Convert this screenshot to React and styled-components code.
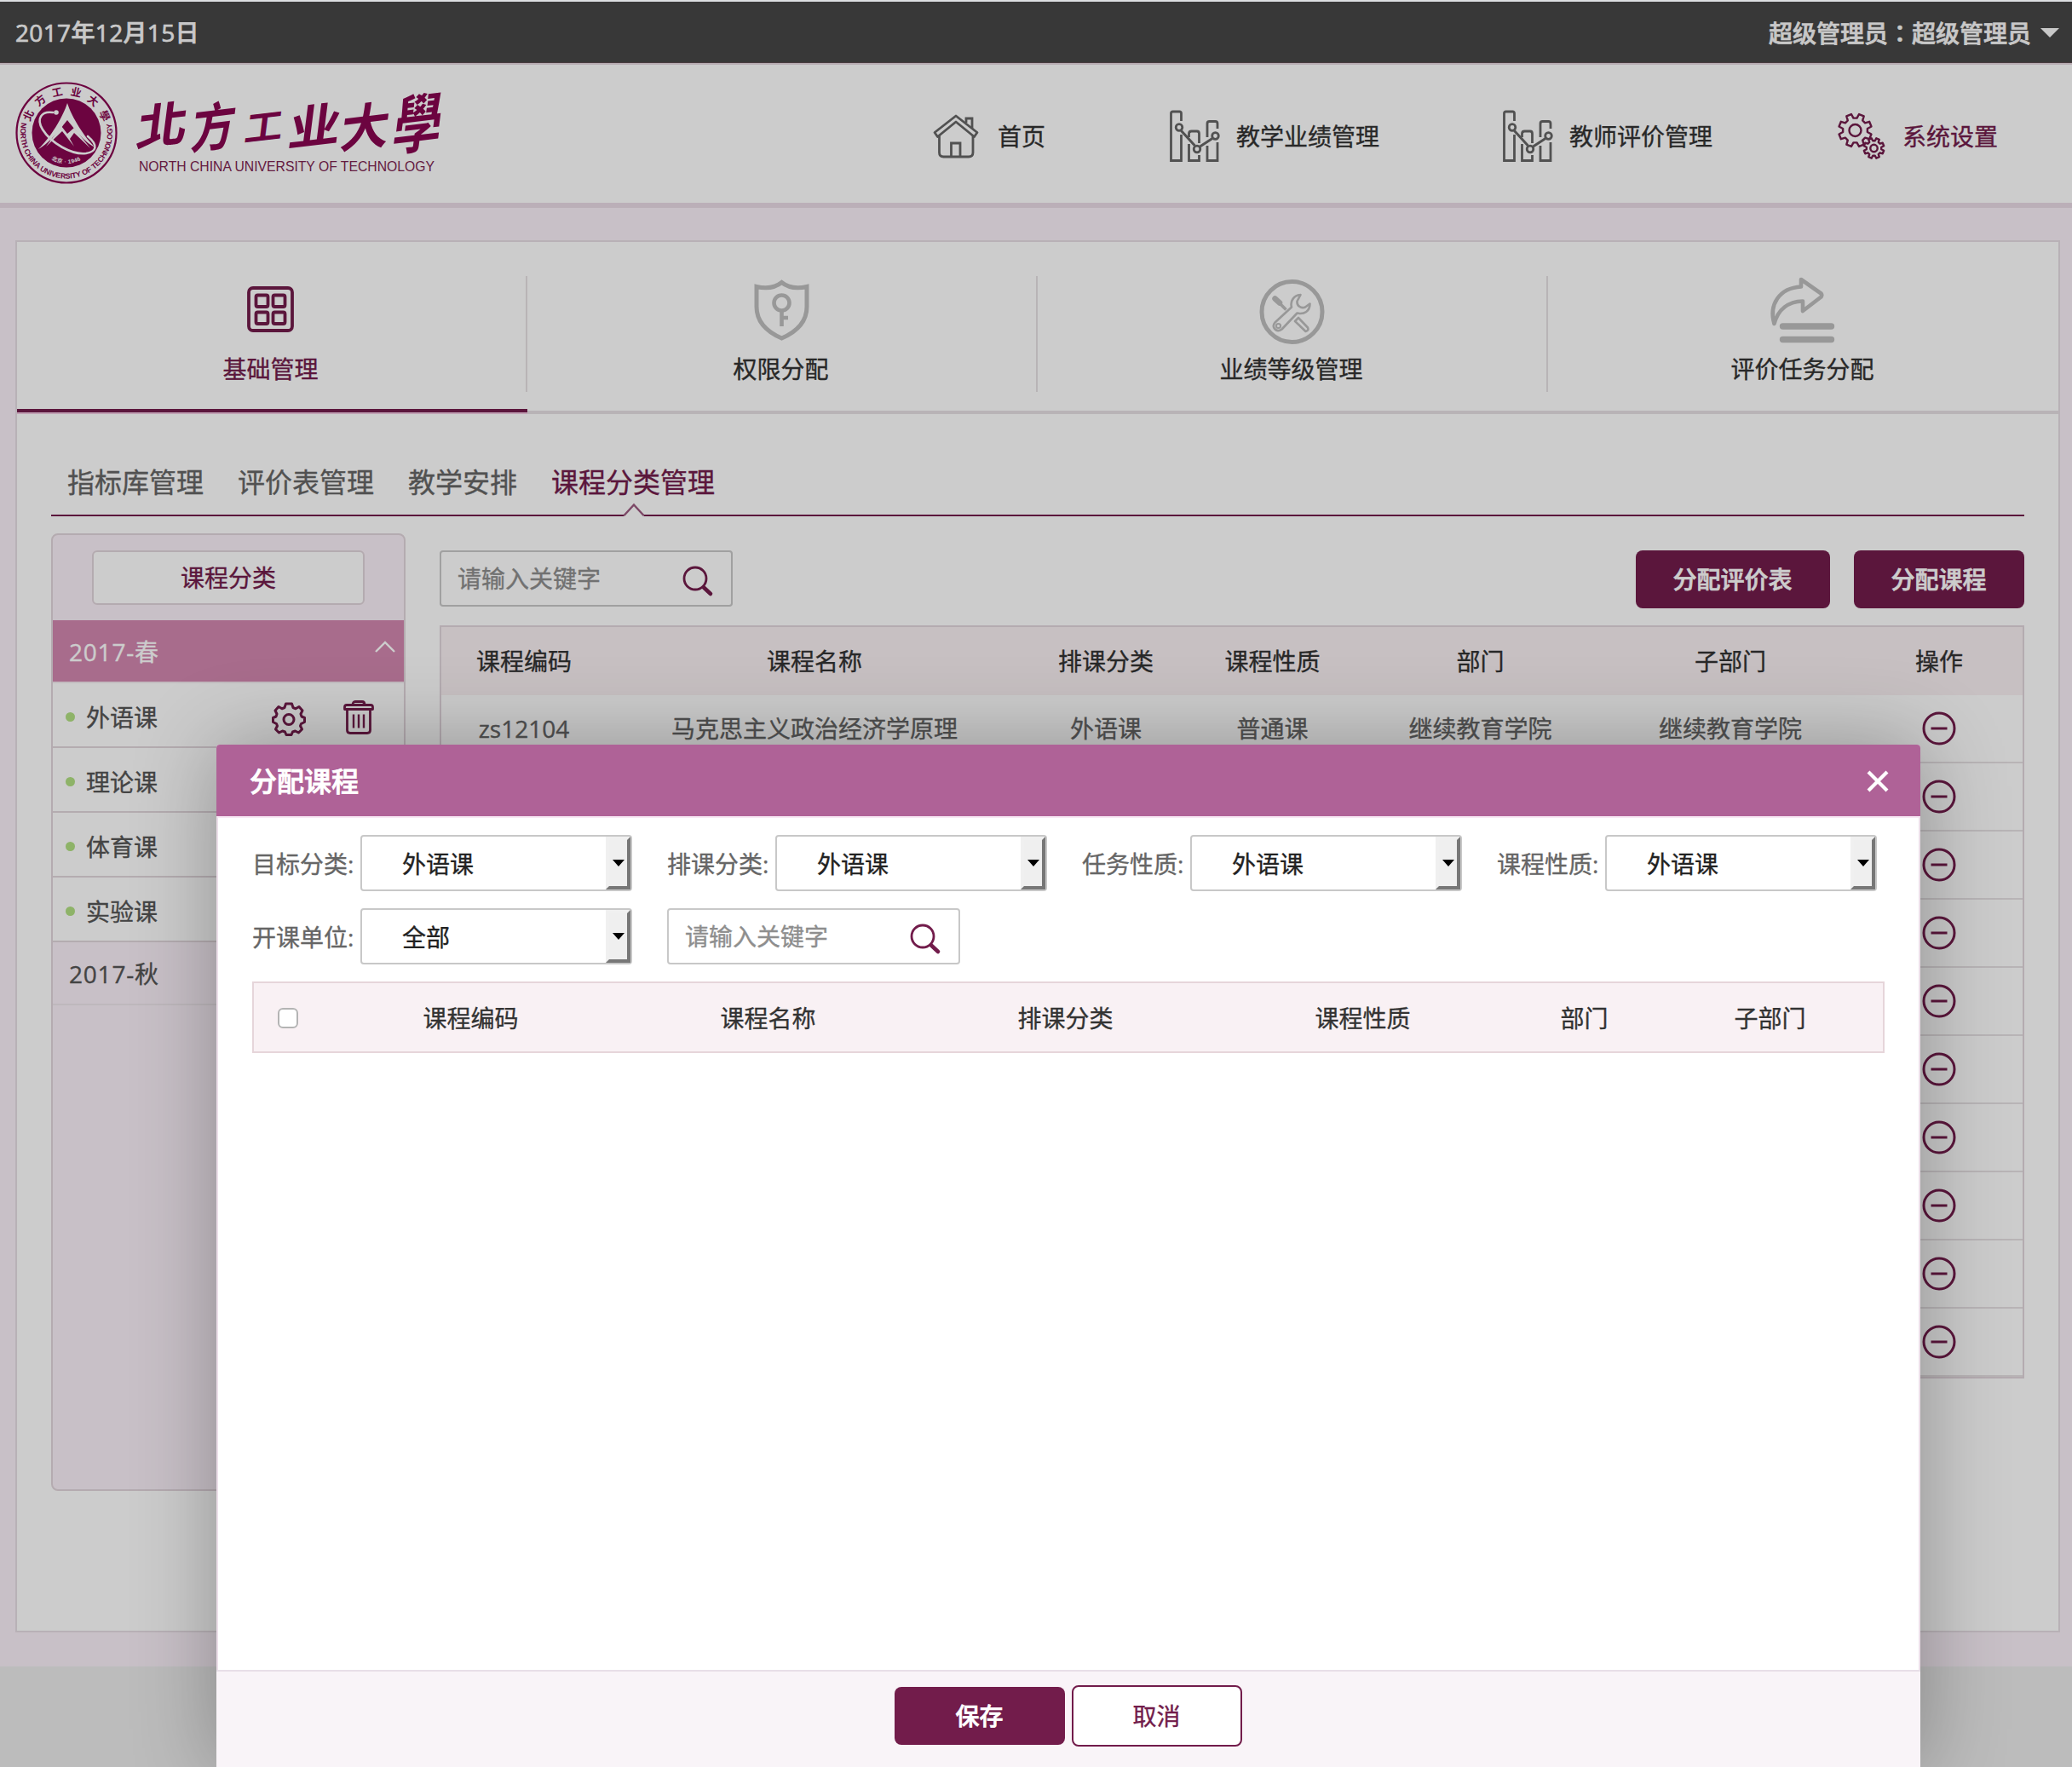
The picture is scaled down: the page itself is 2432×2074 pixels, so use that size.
import React from "react";
import styled, { createGlobalStyle, css } from "styled-components";

const MAROON = "#721c4b";
const SANS = `"Open Sans", "Noto Sans CJK SC", sans-serif`;

const GlobalStyle = createGlobalStyle`
  * { box-sizing: border-box; }
  html, body { margin: 0; padding: 0; }
  body {
    height: 2074px;
    overflow: hidden;
    background: #ebebeb;
    color: #333;
    font: 28px/40px ${SANS};
    -webkit-text-stroke: 0.35px currentColor;
  }
  svg { display: block; flex: none; overflow: visible; }
  svg text { -webkit-text-stroke: 0; }
`;

const Page = styled.div`
  position: relative;
  width: 2432px;
  height: 2074px;
  overflow: hidden;
`;

/* ---------- top bar ---------- */

const TopLine = styled.div`
  position: relative;
  z-index: 3;
  height: 2px;
  background: #dcdee1;
`;

const TopBar = styled.div`
  display: flex;
  align-items: center;
  justify-content: space-between;
  height: 72px;
  padding: 1px 15px 0 18px;
  border-bottom: 1px solid #5a4c50;
  background: #464646;
  color: #fafafa;
  font-weight: 500;
  -webkit-text-stroke-width: 0.7px;
`;

const Today = styled.span`
  letter-spacing: 0.35px;
`;

const UserMenu = styled.div`
  display: flex;
  align-items: center;
  gap: 11px;
  font-family: "Noto Sans CJK SC", sans-serif;
`;

const WideColon = styled.span`
  font-family: "Noto Sans CJK TC", sans-serif;
`;

const CaretDown = styled.i`
  border: solid transparent;
  border-width: 11px 11px 0;
  border-top-color: #fafafa;
`;

/* ---------- header ---------- */

const Header = styled.header`
  display: flex;
  align-items: stretch;
  justify-content: space-between;
  height: 170px;
  padding: 0 87px 0 18px;
  border-top: 2px solid #e6d9e0;
  border-bottom: 6px solid #eadbe6;
  background: #fff;
`;

const Brand = styled.div`
  display: flex;
  gap: 22px;
  padding-top: 20px;
`;

const Nav = styled.nav`
  display: flex;
  align-items: center;
  padding-top: 5px;
`;

const NavItem = styled.a`
  display: flex;
  align-items: center;
  gap: ${(p) => p.$gap}px;
  margin-left: ${(p) => p.$before || 0}px;
  color: ${(p) => (p.$active ? MAROON : "#333")};
`;

/* ---------- card with big tabs ---------- */

const Main = styled.main`
  height: 1712px;
  padding: 38px 14px 40px 18px;
  background: #fbf1f9;
`;

const Card = styled.section`
  height: 1634px;
  border: 2px solid #e6dee4;
  background: #fff;
`;

const Tabs = styled.div`
  display: grid;
  grid-template-columns: repeat(4, 599px);
  height: 202px;
`;

const Tab = styled.div`
  display: flex;
  flex-direction: column;
  padding-top: 40px;
  border-bottom: 4px solid #e6e0e4;
  color: ${(p) => (p.$active ? MAROON : "#333")};
  ${(p) =>
    p.$active &&
    css`
      border-bottom-color: ${MAROON};
      height: 200px;
      box-shadow: 0 2px 0 #f0c8e0;
    `}
`;

const TabInner = styled.div`
  display: flex;
  flex-direction: column;
  align-items: center;
  gap: 5px;
  height: 136px;
  padding-right: 2px;
  border-right: ${(p) => (p.$last ? "0" : "2px")} solid #e6e2e4;
`;

/* ---------- sub navigation ---------- */

const SubNav = styled.div`
  display: flex;
  gap: 40px;
  width: 2316px;
  height: 100px;
  margin: 20px 0 20px 40px;
  padding: 37px 20px 0 19px;
  border-bottom: 2px solid ${MAROON};
  font-size: 32px;
  line-height: 46px;
`;

const SubItem = styled.a`
  position: relative;
  height: 61px;
  color: ${(p) => (p.$active ? MAROON : "#666")};
`;

const SubCaret = styled.svg`
  position: absolute;
  left: 50%;
  bottom: -2px;
  margin-left: -12px;
`;

/* ---------- workspace ---------- */

const Workspace = styled.div`
  display: flex;
  align-items: flex-start;
  gap: 40px;
  padding-left: 40px;
`;

const Sidebar = styled.aside`
  width: 416px;
  height: 1124px;
  border: 2px solid #e2d6dc;
  border-radius: 8px;
  background: #fbf1f9;
`;

const SideHead = styled.div`
  display: flex;
  justify-content: center;
  height: 100px;
  padding-top: 18px;
`;

const SideButton = styled.button`
  width: 320px;
  height: 64px;
  padding: 0;
  border: 2px solid #e2d6dc;
  border-radius: 6px;
  background: #fff;
  color: ${MAROON};
  font: 28px/40px ${SANS};
  -webkit-text-stroke: inherit;
`;

const Term = styled.div`
  display: flex;
  align-items: center;
  justify-content: space-between;
  height: 74px;
  padding: 1px 10px 0 19px;
  border-bottom: 2px solid #eee6ec;
  color: #555;
  letter-spacing: 0.8px;
  ${(p) =>
    p.$open &&
    css`
      border-bottom-color: #f3eaef;
      background: #d387af;
      background-clip: padding-box;
      color: #fff;
    `}
`;

const TermCaret = styled.span`
  display: flex;
  padding-bottom: 12px;
`;

const Category = styled.div`
  display: flex;
  align-items: center;
  height: 76px;
  padding: 5px 34px 0 15px;
  border-bottom: 2px solid #e2d8dc;
  background: #fff;
  color: #555;
`;

const Dot = styled.i`
  width: 11px;
  height: 11px;
  margin-right: 13px;
  border-radius: 50%;
  background: #b2e082;
`;

const CategoryTools = styled.span`
  display: flex;
  align-items: center;
  gap: 43px;
  margin-left: auto;

  > :first-child {
    margin-top: 5px;
  }
`;

const Content = styled.div`
  display: flex;
  flex-direction: column;
  width: 1860px;
  padding-top: 20px;
`;

const Toolbar = styled.div`
  display: flex;
  gap: 28px;
  height: 88px;
`;

const SearchBox = styled.label`
  display: flex;
  align-items: center;
  justify-content: space-between;
  width: 344px;
  height: 66px;
  padding: 0 21px 0 19px;
  border: 2px solid #c8c8c8;
  border-radius: 4px;
  background: #fff;
  color: #8e8e8e;

  svg {
    margin-top: 5px;
  }
`;

const Spacer = styled.span`
  flex: 1;
`;

const Button = styled.button`
  width: ${(p) => p.$w || 200}px;
  height: ${(p) => (p.$ghost ? 72 : 68)}px;
  padding: 0 1px 0 0;
  border: ${(p) => (p.$ghost ? `2px solid ${MAROON}` : "0")};
  border-radius: 8px;
  background: ${(p) => (p.$ghost ? "#fff" : MAROON)};
  color: ${(p) => (p.$ghost ? MAROON : "#fff")};
  font: ${(p) => (p.$ghost ? 400 : 500)} 28px/40px ${SANS};
  -webkit-text-stroke: ${(p) => (p.$ghost ? 0.35 : 0.7)}px currentColor;
`;

const Table = styled.div`
  height: 884px;
  border: 2px solid #e2d6dc;
`;

const Row = styled.div`
  display: grid;
  grid-template-columns: 194px 488px 196px 195px 293px 294px 196px;
  align-items: center;
  justify-items: center;
  height: 80px;
  border-bottom: 2px solid #e6e2e4;
  color: #666;
  ${(p) =>
    p.$head &&
    css`
      border-bottom: 0;
      background: #f9f0f3;
      color: #333;
    `}
`;

const OpCell = styled.span`
  grid-column: 7;
`;

/* ---------- dialog ---------- */

const Shade = styled.div`
  position: absolute;
  inset: 0;
  z-index: 1;
  background: rgba(0, 0, 0, 0.2);
`;

const Dialog = styled.section`
  position: absolute;
  z-index: 2;
  left: 254px;
  top: 874px;
  display: flex;
  flex-direction: column;
  width: 2000px;
  height: 1200px;
  border-radius: 4px 4px 0 0;
  background: #fff;
  box-shadow: 2px 2px 100px rgba(0, 0, 0, 0.3);
`;

const DialogHead = styled.header`
  display: flex;
  align-items: center;
  justify-content: space-between;
  height: 84px;
  padding: 2px 37px 0 39px;
  border-radius: 4px 4px 0 0;
  background: #af6297;
  color: #fff;
  font-size: 32px;
  font-weight: 500;
  -webkit-text-stroke-width: 0.8px;
`;

const DialogBody = styled.div`
  height: 1002px;
  padding: 20px 40px 0;
  border: 2px solid #ecdfe9;
  border-top-color: #f8e8f4;
  border-bottom: 0;
`;

const Filters = styled.div`
  display: grid;
  grid-template-columns: repeat(4, 446px);
  gap: 20px 41px;
  margin-bottom: 20px;
`;

const Field = styled.label`
  display: flex;
  align-items: center;
  justify-content: space-between;
  color: #666;
`;

const Caption = styled.span`
  padding-top: 1px;
`;

const Select = styled.span`
  display: flex;
  align-items: center;
  justify-content: space-between;
  width: 319px;
  height: 66px;
  padding-left: 47px;
  border: 2px solid #c8c8c8;
  border-radius: 4px;
  color: #222;
`;

const SelectButton = styled.span`
  display: flex;
  align-items: center;
  justify-content: center;
  width: 29px;
  height: 62px;
  border: solid;
  border-width: 4px;
  border-color: #f0f0f0 #777 #777 #f0f0f0;
  background: #efefef;

  &::after {
    content: "";
    border: solid transparent;
    border-width: 8px 7px 0;
    border-top-color: #000;
  }
`;

const PickHead = styled.div`
  display: grid;
  grid-template-columns: 80px repeat(4, 349px) 171px 265px;
  align-items: center;
  justify-items: center;
  width: 1916px;
  height: 84px;
  padding-top: 1px;
  border: 2px solid #e6d5da;
  background: #f9f1f4;
  color: #333;
`;

const Checkbox = styled.i`
  width: 24px;
  height: 24px;
  border: 2px solid #b4b4b4;
  border-radius: 6px;
  background: #fff;
`;

const DialogFoot = styled.footer`
  display: flex;
  align-items: center;
  justify-content: center;
  gap: 8px;
  height: 114px;
  padding-bottom: 8px;
  border-top: 2px solid #e8dfe8;
  background: #f9f4f8;
`;

/* ---------- drawings ---------- */

function gearPath(cx, cy, outer, inner, teeth) {
  const step = (Math.PI * 2) / teeth;
  const pts = [];
  for (let i = 0; i < teeth; i += 1) {
    const a = i * step - Math.PI / 2 + step / 2;
    [
      [inner, -0.32],
      [outer, -0.2],
      [outer, 0.2],
      [inner, 0.32],
    ].forEach(([r, k]) => {
      const t = a + k * step;
      pts.push(`${(cx + r * Math.cos(t)).toFixed(2)} ${(cy + r * Math.sin(t)).toFixed(2)}`);
    });
  }
  return `M${pts.join("L")}Z`;
}

const Seal = () => (
  <svg width="120" height="120" viewBox="0 0 120 120" fill="none">
    <defs>
      <path id="ring-cn" d="M15.500 60A44.500 44.500 0 0 1 104.500 60" />
      <path id="ring-en" d="M7.500 47A54 54 0 1 0 112.500 47" />
      <path id="ring-in" d="M24 60A36 36 0 0 0 96 60" />
    </defs>
    <circle cx="60" cy="60" r="58.500" stroke="#880550" strokeWidth="2.200" />
    <circle cx="60" cy="60" r="40.500" fill="#880550" />
    <path
      d="M61 25C66 41 82 67 94 77C80 71 67 52 61 45C55 52 42 71 27 79C41 66 56 41 61 25Z"
      fill="#fff"
    />
    <path d="M36 76L54 52L61 61L69 54L88 78L69 60L64 67L69 76L55 58Z" fill="#fff" />
    <path
      d="M44 36C31 34 24 43 32 56C42 72 66 86 83 84C95 82 98 75 85 64"
      stroke="#fff"
      strokeWidth="2.600"
      strokeLinecap="round"
    />
    <circle cx="48" cy="36" r="2.800" fill="#fff" />
    <text fill="#880550" fontSize="12.500" fontWeight="700" fontFamily="Noto Sans CJK TC, sans-serif">
      <textPath href="#ring-cn" startOffset="13" textLength="114">
        北方工业大學
      </textPath>
    </text>
    <text fill="#880550" fontSize="8.800" fontWeight="700" fontFamily="Liberation Sans, sans-serif">
      <textPath href="#ring-en" startOffset="1" textLength="192">
        NORTH CHINA UNIVERSITY OF TECHNOLOGY
      </textPath>
    </text>
    <text fill="#fff" fontSize="6.500" fontWeight="700" fontFamily="Liberation Sans, Noto Sans CJK SC, sans-serif">
      <textPath href="#ring-in" startOffset="38" textLength="36">
        北京 · 1946
      </textPath>
    </text>
  </svg>
);

const TITLE = [
  ["北", 31, 50, 58, 58],
  ["方", 91, 52, 50, 62],
  ["工", 150, 52, 44, 42],
  ["业", 210, 51, 60, 56],
  ["大", 269, 52, 56, 60],
  ["學", 331, 48, 56, 76],
];

const Wordmark = () => (
  <svg width="370" height="124" viewBox="0 0 370 124">
    <g fill="#880550" fontFamily="Noto Sans CJK TC, sans-serif" fontWeight="700" textAnchor="middle">
      {TITLE.map(([ch, x, y, w, h]) => (
        <text key={ch} fontSize="60" transform={`translate(${x} ${y}) skewX(-14) rotate(-7) scale(${w / 60} ${h / 60})`} y="23">
          {ch}
        </text>
      ))}
    </g>
    <text x="3" y="105" fontSize="17" fill="#7d2451" fontFamily="Liberation Sans, sans-serif" textLength="347" lengthAdjust="spacingAndGlyphs">
      NORTH CHINA UNIVERSITY OF TECHNOLOGY
    </text>
  </svg>
);

const HomeIcon = () => (
  <svg width="56" height="56" viewBox="0 0 56 56" fill="none" stroke="#666" strokeWidth="2.800">
    <path d="M28 4L3 23.500L6.500 28.500L28 11L49.500 28.500L53 23.500Z" strokeLinejoin="round" />
    <path d="M40 12V7H47V18.500M8.500 27V47Q8.500 52 13.500 52H43Q48 52 48 47V27M22.500 52V36H33V52" />
  </svg>
);

const ChartIcon = () => (
  <svg width="62" height="64" viewBox="0 0 62 64" fill="none" stroke="#666" strokeWidth="2.800">
    <path d="M14.500 14V5Q14.500 3 12.500 3H4.500Q2.500 3 2.500 5V60.500H14.500V30" />
    <path d="M23.500 33V29Q23.500 26 26.500 26H33Q35.500 26 35.500 29V40M23.500 41V60.500H35.500V54" />
    <path d="M45 33V17Q45 14.500 47.500 14.500H54.500Q57 14.500 57 17V23M45 43V60.500H57V39" />
    <path d="M14.500 25.500L30.500 43M36.500 44L51 34.500" strokeWidth="3" />
    <circle cx="12" cy="21.500" r="3.800" />
    <circle cx="33" cy="47" r="3.800" />
    <circle cx="54.500" cy="31.500" r="3.800" />
  </svg>
);

const GearsIcon = () => (
  <svg width="58" height="58" viewBox="0 0 58 58" fill="none" stroke={MAROON} strokeWidth="2.400" strokeLinejoin="round">
    <path d={gearPath(21.5, 22, 19.5, 14.5, 8)} />
    <circle cx="21.500" cy="22" r="7" />
    <path d={gearPath(43.5, 43, 12, 8.8, 8)} fill="#fff" />
    <circle cx="43.500" cy="43" r="4.200" />
  </svg>
);

const GridIcon = () => (
  <svg width="80" height="84" viewBox="0 0 80 84" fill="none" stroke={MAROON} strokeWidth="3.800">
    <rect x="14" y="14" width="51" height="50" rx="5" />
    <rect x="22.500" y="22.500" width="14" height="13.500" rx="2" />
    <rect x="42.500" y="22.500" width="14" height="13.500" rx="2" />
    <rect x="22.500" y="42.500" width="14" height="13.500" rx="2" />
    <rect x="42.500" y="42.500" width="14" height="13.500" rx="2" />
  </svg>
);

const ShieldIcon = () => (
  <svg width="80" height="84" viewBox="0 0 80 84" fill="none" stroke="#bfbfbf" strokeWidth="5">
    <path d="M40.500 7.500C33 13.500 22 15 11 12.500V36C11 53 22 65 40.500 73C59 65 70 53 70 36V12.500C59 15 48 13.500 40.500 7.500Z" />
    <circle cx="40.500" cy="31.500" r="9" strokeWidth="4.600" />
    <path d="M40.500 41V59M40.500 49H48" strokeWidth="4.600" />
  </svg>
);

const ToolsIcon = () => (
  <svg width="80" height="84" viewBox="0 0 80 84" fill="none" stroke="#bfbfbf">
    <circle cx="40.500" cy="42" r="35.500" strokeWidth="5" />
    <path
      d="M40 36.500C38 29 43 22.500 50.500 22L46.500 29.500C46 35 51 38.500 56 36.500L61.500 32.500C61.500 41 55 45.500 46.500 43.500L28.500 62.500C22 67 16 60 20.500 54.500Z"
      strokeWidth="2.600"
      strokeLinejoin="round"
    />
    <circle cx="24.500" cy="58.500" r="2.600" strokeWidth="2" />
    <path d="M20.500 26.500L26 31.500" strokeWidth="6.500" strokeLinecap="round" />
    <path d="M25 31L33.500 39.500" strokeWidth="3.600" />
    <path d="M48 49L59 60.500Q60.500 64 56.500 65L44 53Z" strokeWidth="2.600" strokeLinejoin="round" />
  </svg>
);

const ShareIcon = () => (
  <svg width="80" height="84" viewBox="0 0 80 84" fill="none" stroke="#bfbfbf">
    <path
      d="M6.500 56C0 34 12 14 38 12.500V4L61.500 20.500Q63 22.500 61.500 24.500L40 41V29.500C23 30 11 39 6.500 56Z"
      strokeWidth="4.600"
      strokeLinejoin="round"
    />
    <path d="M16.500 59H73.500M16.500 74.500H73.500" strokeWidth="7.400" strokeLinecap="round" />
  </svg>
);

const GearIcon = () => (
  <svg width="40" height="40" viewBox="0 0 40 40" fill="none" stroke={MAROON} strokeWidth="3" strokeLinejoin="round">
    <path d="M16.500 2H23.500L25 6.500L28 7.800L32 5.500L36 10L34 14L35 17L38.500 18.500V23.500L34.500 25.500L33.500 28L35.500 32L31.500 36L27.500 34L24.500 35L23 38.500H17L15.500 35L12.500 34L8.500 36L4.500 32L6.500 28L5.500 25.500L1.500 23.500V18.500L5 17L6 14L4 10L8 5.500L12 7.800L15 6.500Z" />
    <circle cx="20" cy="20.500" r="6" />
  </svg>
);

const TrashIcon = () => (
  <svg width="38" height="42" viewBox="0 0 38 42" fill="none" stroke={MAROON} strokeWidth="2.800" strokeLinejoin="round">
    <path d="M12 6.500Q12 2.500 15 2.500H23Q26 2.500 26 6.500M2.500 11.500V9Q2.500 6.500 5 6.500H33Q35.500 6.500 35.500 9V11.500ZM5.500 12V36Q5.500 39.500 9 39.500H29Q32.500 39.500 32.500 36V12" />
    <path d="M13 17.500V33.500M19 17.500V33.500M25 17.500V33.500" strokeWidth="2.400" />
  </svg>
);

const SearchIcon = () => (
  <svg width="36" height="36" viewBox="0 0 36 36" fill="none" stroke={MAROON} strokeLinecap="round">
    <circle cx="15" cy="15" r="13" strokeWidth="2.800" />
    <path d="M25 25.500L33 33" strokeWidth="4.600" />
  </svg>
);

const RemoveIcon = () => (
  <svg width="40" height="40" viewBox="0 0 40 40" fill="none" stroke={MAROON} strokeWidth="3">
    <circle cx="20" cy="20" r="18" />
    <path d="M10.500 20H29.500" />
  </svg>
);

const CloseIcon = () => (
  <svg width="26" height="26" viewBox="0 0 26 26" stroke="#fff" strokeWidth="4.200">
    <path d="M2 2L24 24M24 2L2 24" />
  </svg>
);

const ChevronUp = () => (
  <svg width="24" height="14" viewBox="0 0 24 14" fill="none" stroke="#fff" strokeWidth="2.400">
    <path d="M1 13L12 2L23 13" />
  </svg>
);

/* ---------- data ---------- */

const TABS = [
  ["基础管理", GridIcon],
  ["权限分配", ShieldIcon],
  ["业绩等级管理", ToolsIcon],
  ["评价任务分配", ShareIcon],
];
const SUBNAV = ["指标库管理", "评价表管理", "教学安排", "课程分类管理"];
const CATEGORIES = ["外语课", "理论课", "体育课", "实验课"];
const COLUMNS = ["课程编码", "课程名称", "排课分类", "课程性质", "部门", "子部门", "操作"];
const COURSE = ["zs12104", "马克思主义政治经济学原理", "外语课", "普通课", "继续教育学院", "继续教育学院"];
const FILTERS = [
  ["目标分类:", "外语课"],
  ["排课分类:", "外语课"],
  ["任务性质:", "外语课"],
  ["课程性质:", "外语课"],
  ["开课单位:", "全部"],
];

const Search = () => (
  <SearchBox>
    <span>请输入关键字</span>
    <SearchIcon />
  </SearchBox>
);

export default function App() {
  return (
    <Page>
      <GlobalStyle />
      <TopLine />
      <TopBar>
        <Today>2017年12月15日</Today>
        <UserMenu>
          <span>
            超级管理员<WideColon lang="zh-TW">：</WideColon>超级管理员
          </span>
          <CaretDown />
        </UserMenu>
      </TopBar>

      <Header>
        <Brand>
          <Seal />
          <Wordmark />
        </Brand>
        <Nav>
          <NavItem $gap={21}>
            <HomeIcon />
            首页
          </NavItem>
          <NavItem $gap={17} $before={145}>
            <ChartIcon />
            教学业绩管理
          </NavItem>
          <NavItem $gap={17} $before={144}>
            <ChartIcon />
            教师评价管理
          </NavItem>
          <NavItem $gap={19} $before={146} $active>
            <GearsIcon />
            系统设置
          </NavItem>
        </Nav>
      </Header>

      <Main>
        <Card>
          <Tabs>
            {TABS.map(([name, Icon], i) => (
              <Tab key={name} $active={i === 0}>
                <TabInner $last={i === 3}>
                  <Icon />
                  {name}
                </TabInner>
              </Tab>
            ))}
          </Tabs>

          <SubNav>
            {SUBNAV.map((name, i) => (
              <SubItem key={name} $active={i === 3}>
                {name}
                {i === 3 && (
                  <SubCaret width="26" height="16" viewBox="0 0 26 16">
                    <path d="M1 16L13 2L25 16Z" fill="#fff" />
                    <path d="M1.500 15L13 2.500L24.500 15" fill="none" stroke="#9c5a80" strokeWidth="2.400" />
                  </SubCaret>
                )}
              </SubItem>
            ))}
          </SubNav>

          <Workspace>
            <Sidebar>
              <SideHead>
                <SideButton>课程分类</SideButton>
              </SideHead>
              <Term $open>
                2017-春
                <TermCaret>
                  <ChevronUp />
                </TermCaret>
              </Term>
              {CATEGORIES.map((name, i) => (
                <Category key={name}>
                  <Dot />
                  {name}
                  {i === 0 && (
                    <CategoryTools>
                      <GearIcon />
                      <TrashIcon />
                    </CategoryTools>
                  )}
                </Category>
              ))}
              <Term>2017-秋</Term>
            </Sidebar>

            <Content>
              <Toolbar>
                <Search />
                <Spacer />
                <Button $w={228}>分配评价表</Button>
                <Button>分配课程</Button>
              </Toolbar>
              <Table>
                <Row $head>
                  {COLUMNS.map((c) => (
                    <span key={c}>{c}</span>
                  ))}
                </Row>
                {Array.from({ length: 10 }, (_, r) => (
                  <Row key={r}>
                    {r === 0 && COURSE.map((v, i) => <span key={i}>{v}</span>)}
                    <OpCell>
                      <RemoveIcon />
                    </OpCell>
                  </Row>
                ))}
              </Table>
            </Content>
          </Workspace>
        </Card>
      </Main>

      <Shade />

      <Dialog>
        <DialogHead>
          分配课程
          <CloseIcon />
        </DialogHead>
        <DialogBody>
          <Filters>
            {FILTERS.map(([label, value]) => (
              <Field key={label}>
                <Caption>{label}</Caption>
                <Select>
                  <Caption>{value}</Caption>
                  <SelectButton />
                </Select>
              </Field>
            ))}
            <Search />
          </Filters>
          <PickHead>
            <Checkbox />
            {COLUMNS.slice(0, 6).map((c) => (
              <span key={c}>{c}</span>
            ))}
          </PickHead>
        </DialogBody>
        <DialogFoot>
          <Button>保存</Button>
          <Button $ghost>取消</Button>
        </DialogFoot>
      </Dialog>
    </Page>
  );
}
